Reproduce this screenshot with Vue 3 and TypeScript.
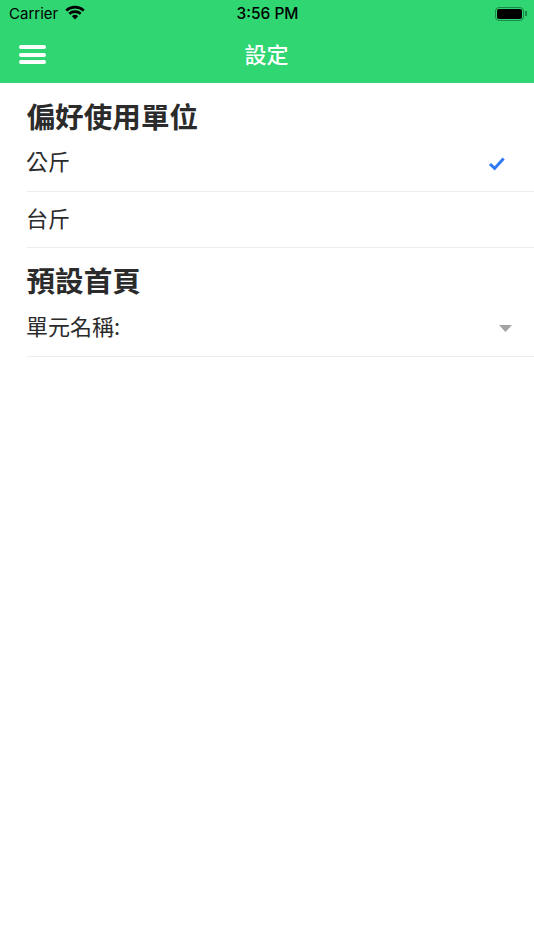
<script setup lang="ts">
const cjk = 'cjk'
</script>

<template>
  <div class="screen">
    <header class="top">
      <div class="status">
        <div class="status-left">
          <span class="carrier">Carrier</span>
          <svg class="wifi" width="20" height="15" viewBox="0 0 20 15">
            <path d="M10 14.6 6.9 11.2a4.6 4.6 0 0 1 6.2 0Z" fill="#000" />
            <path d="M1.2 5.6a13 13 0 0 1 17.6 0" fill="none" stroke="#000" stroke-width="2.6" />
            <path d="M4.3 8.8a8.6 8.6 0 0 1 11.4 0" fill="none" stroke="#000" stroke-width="2.6" />
          </svg>
        </div>
        <span class="time">3:56 PM</span>
        <div class="battery">
          <div class="battery-body"><div class="battery-fill"></div></div>
          <div class="battery-cap"></div>
        </div>
      </div>
      <div class="nav">
        <div class="burger"><i></i><i></i><i></i></div>
        <span class="title">設定</span>
      </div>
    </header>
    <main :class="cjk">
      <h2 class="section">偏好使用單位</h2>
      <div class="row row-a">
        <span>公斤</span>
        <svg class="check" width="18" height="15" viewBox="0 0 18 15">
          <path d="M2 8l4.6 4.4L15.6 2.4" fill="none" stroke="#2f7bf6" stroke-width="3" />
        </svg>
      </div>
      <div class="row row-b"><span>台斤</span></div>
      <h2 class="section section-2">預設首頁</h2>
      <div class="row row-c">
        <span>單元名稱:</span>
        <svg class="caret" width="13" height="7" viewBox="0 0 13 7">
          <path d="M0 0h13L6.5 7Z" fill="#a3a3a3" />
        </svg>
      </div>
    </main>
  </div>
</template>

<style>
html, body { margin: 0; background: #fff; }
</style>

<style scoped>
.screen {
  width: 534px;
  height: 950px;
  overflow: hidden;
  background: #fff;
  font-family: "Noto Sans CJK TC", "Noto Sans CJK SC", sans-serif;
  color: #2b2b2b;
}
.top { background: #2fd672; height: 83px; }
.status {
  height: 27px;
  display: grid;
  grid-template-columns: 1fr auto 1fr;
  align-items: center;
  padding: 0 7px 0 9px;
  color: #000;
  font-family: Inter, "Liberation Sans", sans-serif;
}
.status-left { display: flex; align-items: center; gap: 7px; }
.carrier { font-size: 15px; }
.wifi { margin-top: -3px; }
.time { font-size: 15.5px; font-weight: 500; margin-left: -1px; }
.battery { justify-self: end; display: flex; align-items: center; gap: 1px; }
.battery-body {
  width: 29px;
  height: 14px;
  box-sizing: border-box;
  border: 1px solid #1a8a48;
  border-radius: 4px;
  padding: 1px;
}
.battery-fill { height: 100%; background: #000; border-radius: 2px; }
.battery-cap { width: 2px; height: 5px; background: #1a8a48; }
.nav {
  height: 56px;
  position: relative;
  display: flex;
  justify-content: center;
}
.burger {
  position: absolute;
  left: 19px;
  top: 18px;
  width: 27px;
  display: flex;
  flex-direction: column;
  gap: 3.5px;
}
.burger i { display: block; height: 4px; background: #fff; border-radius: 2px; }
.title { color: #fff; font-size: 22px; font-weight: 500; line-height: 53px; margin-left: -1px; }
main { padding-left: 26.5px; }
.section {
  margin: 0;
  font-size: 28.6px;
  font-weight: 700;
  line-height: 34px;
  padding-top: 16px;
  color: #2b2b2b;
}
.section-2 { padding-top: 15px; }
.row {
  display: flex;
  align-items: center;
  justify-content: space-between;
  font-size: 22px;
  border-bottom: 1.5px solid #ececec;
  box-sizing: border-box;
  padding-right: 22px;
}
.row span { line-height: 30px; margin-left: -0.5px; }
.row-a { height: 59px; padding-bottom: 5px; }
.row-b { height: 56px; padding-bottom: 6px; }
.row-c { height: 60px; padding-bottom: 3px; }
.check { margin-right: 6px; margin-top: 8px; }
.caret { margin-top: 7px; }
</style>
